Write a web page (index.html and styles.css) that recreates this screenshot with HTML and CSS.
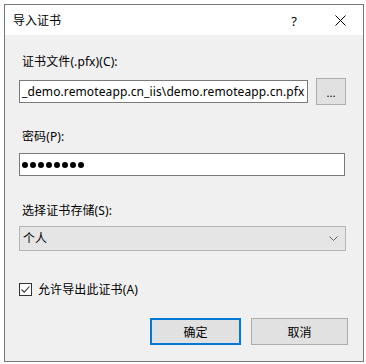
FILE: index.html
```html
<!DOCTYPE html>
<html lang="zh-CN">
<head>
<meta charset="utf-8">
<title>导入证书</title>
<link rel="stylesheet" href="styles.css">
</head>
<body>
<div class="window">
  <div class="titlebar">
    <span class="title">导入证书</span>
    <span class="tb-btn help">?</span>
    <span class="tb-btn close">
      <svg width="11" height="11" viewBox="0 0 11 11"><path d="M0.5 0.5 L10.5 10.5 M10.5 0.5 L0.5 10.5" stroke="#000" stroke-width="1" fill="none"/></svg>
    </span>
  </div>
  <div class="body">
    <div class="lbl lbl-file">证书文件(.pfx)(C):</div>
    <div class="file-row">
      <div class="textbox file"><span class="path">_demo.remoteapp.cn_iis\demo.remoteapp.cn.pfx</span></div>
      <div class="btn browse">...</div>
    </div>
    <div class="lbl lbl-pw">密码(P):</div>
    <div class="textbox pw">
      <span class="dot"></span><span class="dot"></span><span class="dot"></span><span class="dot"></span><span class="dot"></span><span class="dot"></span><span class="dot"></span><span class="dot"></span>
    </div>
    <div class="lbl lbl-store">选择证书存储(S):</div>
    <div class="combo">
      <span class="combo-text">个人</span>
      <svg class="chev" width="9" height="5" viewBox="0 0 9 5"><path d="M0.5 0.5 L4.5 4.5 L8.5 0.5" stroke="#606060" stroke-width="1" fill="none"/></svg>
    </div>
    <div class="check-row">
      <span class="checkbox">
        <svg width="11" height="11" viewBox="0 0 11 11"><path d="M1.5 5.5 L4.2 8.2 L9.5 2.5" stroke="#333" stroke-width="1.1" fill="none"/></svg>
      </span>
      <span class="check-label">允许导出此证书(A)</span>
    </div>
    <div class="buttons">
      <div class="btn ok">确定</div>
      <div class="btn cancel">取消</div>
    </div>
  </div>
</div>
</body>
</html>
```
FILE: styles.css
```css
* { box-sizing: border-box; }
html, body { margin: 0; padding: 0; background: #ffffff; }
body {
  font-family: "Noto Sans", "Noto Sans CJK SC", sans-serif;
  font-size: 12px;
  color: #000;
}
.window {
  margin: 4px 0 0 4px;
  width: 360px;
  height: 358px;
  border: 1px solid #777777;
  background: #f0f0f0;
  display: flex;
  flex-direction: column;
}
.titlebar {
  height: 30px;
  background: #ffffff;
  display: flex;
  align-items: center;
  padding-left: 8px;
  flex: none;
}
.title {
  flex: 1;
  line-height: 16px;
  padding-top: 1px;
}
.tb-btn {
  width: 46px;
  height: 30px;
  display: flex;
  align-items: center;
  justify-content: center;
}
.help { font-size: 13px; padding-top: 1px; }
.close svg { display: block; }
.body {
  flex: 1;
  display: flex;
  flex-direction: column;
  padding: 0 15px 0 14px;
}
.lbl {
  line-height: 16px;
  height: 16px;
  padding-left: 3px;
  letter-spacing: 0.1px;
}
.lbl-file { margin-top: 19px; }
.lbl-pw { margin-top: 24px; }
.lbl-store { margin-top: 27px; }
.file-row {
  margin-top: 8px;
  height: 27px;
  display: flex;
  align-items: center;
  gap: 8px;
}
.textbox {
  height: 23px;
  background: #fff;
  border: 1px solid #7a7a7a;
  display: flex;
  align-items: center;
  padding-left: 2px;
  overflow: hidden;
  white-space: nowrap;
}
.file { width: 289px; }
.path { line-height: 16px; letter-spacing: 0.11px; }
.btn {
  background: #e1e1e1;
  border: 1px solid #adadad;
  display: flex;
  align-items: center;
  justify-content: center;
}
.browse {
  width: 30px;
  height: 27px;
  font-size: 11px;
  padding-top: 2px;
}
.pw {
  margin-top: 8px;
  width: 326px;
  gap: 2px;
}
.dot {
  width: 6px;
  height: 6px;
  border-radius: 50%;
  background: #000;
  flex: none;
}
.combo {
  margin-top: 7px;
  width: 327px;
  height: 25px;
  background: #e5e5e5;
  border: 1px solid #b5b5b5;
  display: flex;
  align-items: center;
  padding: 0 3px 0 3px;
}
.combo-text { flex: 1; line-height: 16px; }
.chev { display: block; margin-right: 4px; }
.check-row {
  margin-top: 32px;
  height: 13px;
  display: flex;
  align-items: center;
}
.checkbox {
  width: 13px;
  height: 13px;
  border: 1px solid #333;
  background: #fff;
  display: flex;
  align-items: center;
  justify-content: center;
  flex: none;
}
.checkbox svg { display: block; }
.check-label { margin-left: 6px; line-height: 16px; letter-spacing: 0.1px; }
.buttons {
  margin-top: 22px;
  display: flex;
  justify-content: flex-end;
  gap: 10px;
}
.ok {
  width: 91px;
  height: 27px;
  border: 2px solid #0078d7;
}
.cancel {
  width: 97px;
  height: 27px;
}
```
